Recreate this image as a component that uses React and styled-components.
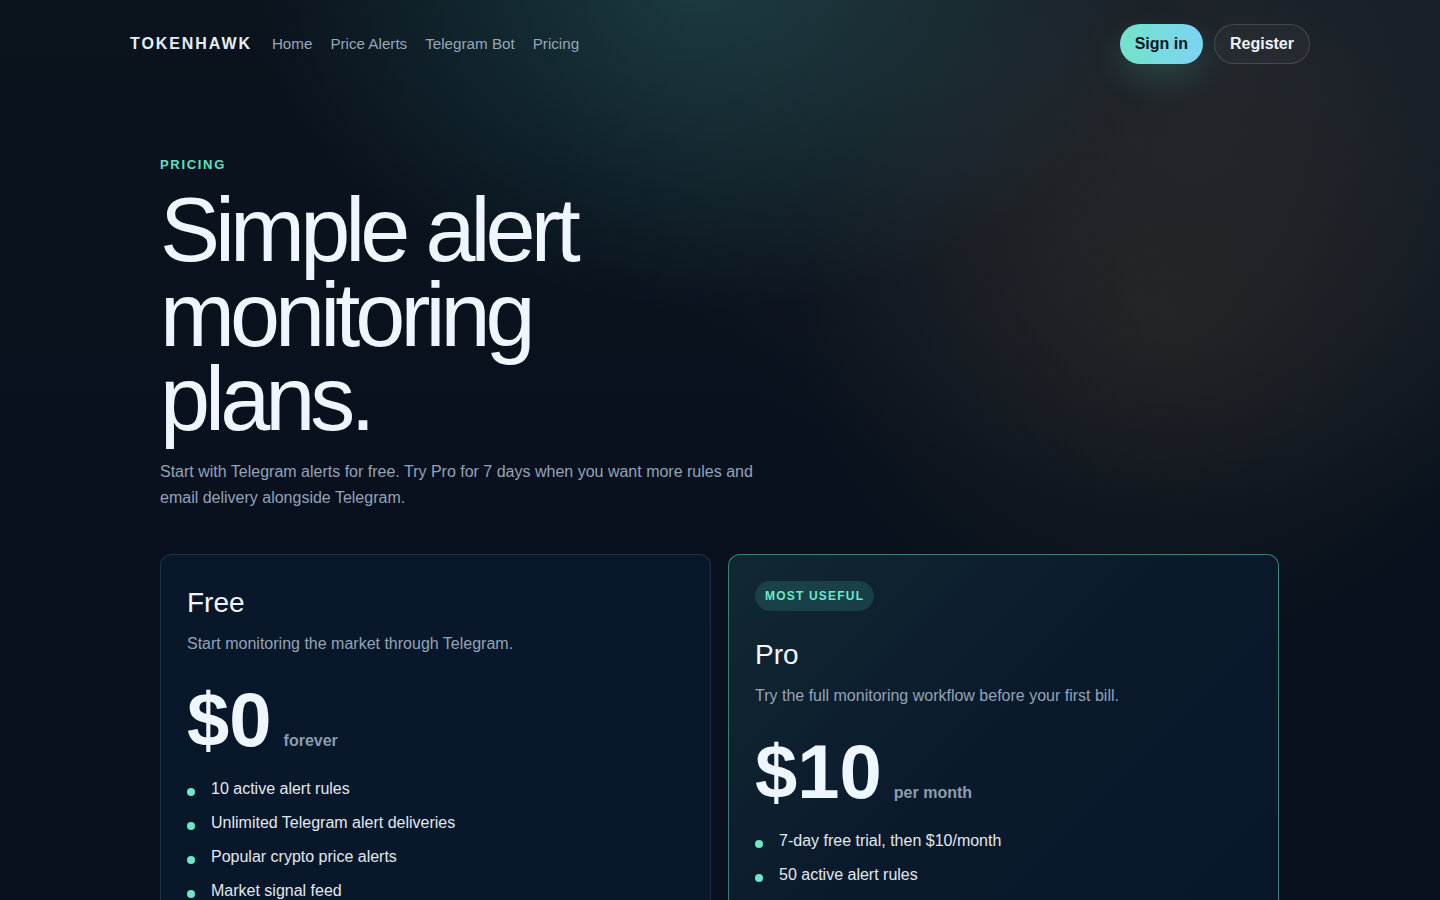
import styled, { createGlobalStyle } from "styled-components";

const GlobalStyle = createGlobalStyle`
  * { box-sizing: border-box; }
  html, body { margin: 0; padding: 0; }
  body {
    min-height: 100vh;
    font-family: "Liberation Sans", Arial, sans-serif;
    color: #eef5ff;
    background:
      radial-gradient(ellipse 620px 460px at 700px -20px, rgba(48, 118, 118, 0.38), transparent 72%),
      radial-gradient(ellipse 520px 480px at 1160px 320px, rgba(105, 82, 52, 0.2), transparent 70%),
      radial-gradient(ellipse 980px 640px at 1240px 60px, rgba(58, 60, 62, 0.42), transparent 72%),
      linear-gradient(180deg, #0b131d 0%, #08111d 55%, #07101c 100%);
    background-attachment: fixed;
  }
`;

const Page = styled.div`
  min-height: 100vh;
`;

const Nav = styled.header`
  display: flex;
  align-items: center;
  justify-content: space-between;
  padding: 24px 130px;
`;

const NavLeft = styled.div`
  display: flex;
  align-items: center;
  gap: 20px;
`;

const Logo = styled.span`
  font-size: 16px;
  font-weight: 700;
  letter-spacing: 0.12em;
  color: #e6eef8;
`;

const Links = styled.nav`
  display: flex;
  gap: 18px;
`;

const NavLink = styled.a`
  font-size: 15.2px;
  line-height: 18px;
  color: #97a6ba;
  text-decoration: none;
`;

const NavRight = styled.div`
  display: flex;
  align-items: center;
  gap: 11px;
`;

const Button = styled.button`
  height: 40px;
  padding: 0 ${(p) => (p.$primary ? "14px" : "15px")};
  border-radius: 999px;
  font-family: inherit;
  font-size: 16px;
  font-weight: 700;
  cursor: pointer;
  border: 1px solid
    ${(p) => (p.$primary ? "transparent" : "rgba(255, 255, 255, 0.14)")};
  background: ${(p) =>
    p.$primary
      ? "linear-gradient(90deg, #72e3c9 0%, #7dd3f5 100%)"
      : "rgba(255, 255, 255, 0.03)"};
  color: ${(p) => (p.$primary ? "#0b1624" : "#eef2f7")};
  box-shadow: ${(p) =>
    p.$primary ? "0 14px 32px rgba(94, 234, 212, 0.16)" : "none"};
`;

const Main = styled.main`
  padding: 69px 160px 0;
`;

const Eyebrow = styled.div`
  font-size: 13px;
  line-height: 16px;
  font-weight: 700;
  letter-spacing: 0.13em;
  color: #5fe0c4;
`;

const Heading = styled.h1`
  margin: 15px 0 0;
  max-width: 590px;
  font-size: 90px;
  line-height: 0.94;
  font-weight: 400;
  letter-spacing: -0.055em;
  color: #eff6ff;
`;

const Lead = styled.p`
  margin: 17px 0 0;
  max-width: 620px;
  font-size: 16px;
  line-height: 26px;
  color: #94a3b8;
`;

const Plans = styled.section`
  display: grid;
  grid-template-columns: 551px 551px;
  gap: 17px;
  margin-top: 43px;
`;

const Card = styled.article`
  border-radius: 12px;
  padding: 26px 26px 40px;
  border: 1px solid
    ${(p) => (p.$featured ? "rgba(94, 214, 190, 0.55)" : "rgba(120, 150, 185, 0.22)")};
  background: ${(p) =>
    p.$featured
      ? "linear-gradient(135deg, #112833 0%, #0b1a2b 45%, #08162a 100%)"
      : "#081729"};
`;

const Badge = styled.span`
  display: inline-flex;
  align-items: center;
  height: 30px;
  padding: 0 10px;
  border-radius: 999px;
  background: rgba(94, 234, 212, 0.14);
  color: #6ee7c9;
  font-size: 12px;
  font-weight: 700;
  letter-spacing: 0.1em;
  margin-bottom: 22px;
`;

const PlanName = styled.h2`
  margin: 5px 0 0;
  font-size: 28px;
  line-height: 34px;
  font-weight: 400;
  color: #f1f6fd;
`;

const PlanText = styled.p`
  margin: 12px 0 0;
  font-size: 16px;
  line-height: 24px;
  color: #94a3b8;
`;

const PriceRow = styled.div`
  display: flex;
  align-items: baseline;
  gap: 12px;
  margin-top: 26px;
`;

const Amount = styled.span`
  font-size: 76px;
  line-height: 1;
  font-weight: 700;
  color: #eef6ff;
`;

const Period = styled.span`
  font-size: 16px;
  font-weight: 700;
  color: #8c9cb1;
`;

const Features = styled.ul`
  list-style: none;
  margin: 19px 0 0;
  padding: 0;
  display: flex;
  flex-direction: column;
  gap: 10px;
`;

const Feature = styled.li`
  display: flex;
  align-items: center;
  gap: 16px;
  font-size: 16px;
  line-height: 24px;
  color: #e2e8f0;

  &::before {
    content: "";
    width: 8px;
    height: 8px;
    border-radius: 50%;
    background: #6ee7c9;
    flex-shrink: 0;
    transform: translateY(3px);
  }
`;

const plans = [
  {
    name: "Free",
    text: "Start monitoring the market through Telegram.",
    amount: "$0",
    period: "forever",
    features: [
      "10 active alert rules",
      "Unlimited Telegram alert deliveries",
      "Popular crypto price alerts",
      "Market signal feed",
    ],
  },
  {
    name: "Pro",
    badge: "MOST USEFUL",
    featured: true,
    text: "Try the full monitoring workflow before your first bill.",
    amount: "$10",
    period: "per month",
    features: [
      "7-day free trial, then $10/month",
      "50 active alert rules",
      "Email delivery alongside Telegram",
      "Priority market signal feed",
    ],
  },
];

export default function App() {
  return (
    <Page>
      <GlobalStyle />
      <Nav>
        <NavLeft>
          <Logo>TOKENHAWK</Logo>
          <Links>
            <NavLink href="#">Home</NavLink>
            <NavLink href="#">Price Alerts</NavLink>
            <NavLink href="#">Telegram Bot</NavLink>
            <NavLink href="#">Pricing</NavLink>
          </Links>
        </NavLeft>
        <NavRight>
          <Button $primary>Sign in</Button>
          <Button>Register</Button>
        </NavRight>
      </Nav>

      <Main>
        <Eyebrow>PRICING</Eyebrow>
        <Heading>Simple alert monitoring plans.</Heading>
        <Lead>
          Start with Telegram alerts for free. Try Pro for 7 days when you want
          more rules and email delivery alongside Telegram.
        </Lead>

        <Plans>
          {plans.map((plan) => (
            <Card key={plan.name} $featured={plan.featured}>
              {plan.badge && <Badge>{plan.badge}</Badge>}
              <PlanName>{plan.name}</PlanName>
              <PlanText>{plan.text}</PlanText>
              <PriceRow>
                <Amount>{plan.amount}</Amount>
                <Period>{plan.period}</Period>
              </PriceRow>
              <Features>
                {plan.features.map((f) => (
                  <Feature key={f}>{f}</Feature>
                ))}
              </Features>
            </Card>
          ))}
        </Plans>
      </Main>
    </Page>
  );
}
